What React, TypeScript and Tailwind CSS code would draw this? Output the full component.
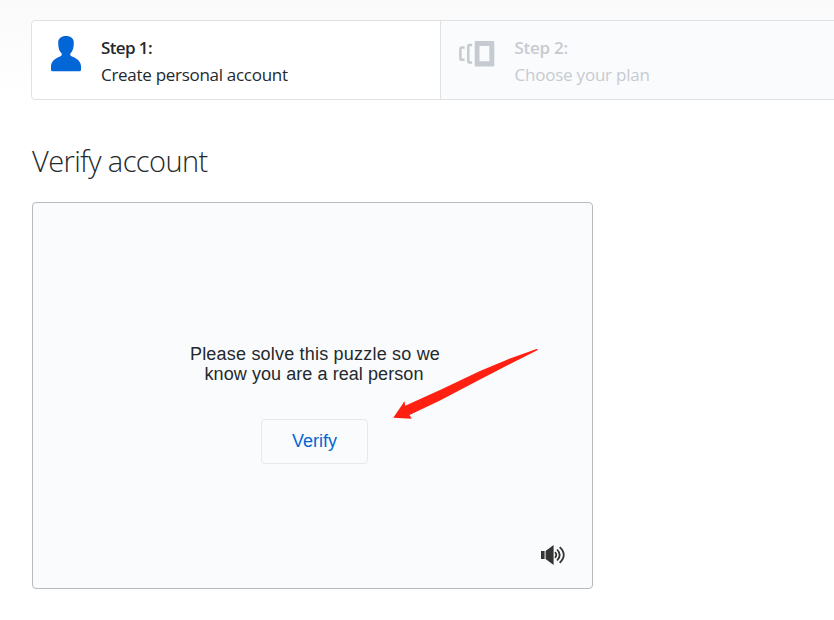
function PersonIcon() {
  return (
    <svg className="block h-9 w-[31px]" viewBox="51 36 31 36" fill="#0366d6">
      <path d="M66 36C61.3 36 58.2 38.5 58.2 42.5C58.2 47.5 59 51 61.7 53.4V54.8C61.7 55.8 61 56.1 59.5 56.7C54.5 58.6 51 61.8 51 66.5V69.7Q51 71.3 52.5 71.3H79.5Q81 71.3 81 69.7V66.5C81 61.8 77.5 58.6 72.5 56.7C71 56.1 70.3 55.8 70.3 54.8V53.4C73 51 73.8 47.5 73.8 42.5C73.8 38.5 70.7 36 66 36Z" />
    </svg>
  );
}

function VersionsIcon() {
  return (
    <svg className="block h-[26px] w-9" viewBox="459 41 36 26" fill="none" stroke="#c6cbd1">
      <path fill="#c6cbd1" stroke="none" fillRule="evenodd" d="M476 41H493Q494.3 41 494.3 42.3V65.2Q494.3 66.5 493 66.5H476Q474.7 66.5 474.7 65.2V42.3Q474.7 41 476 41ZM479.5 46V61.3H489.3V46Z" />
      <path strokeWidth="2.5" d="M472.1 44.9H469.3Q468.3 44.9 468.3 45.9V61.5Q468.3 62.5 469.3 62.5H472.1" />
      <path strokeWidth="2.5" d="M464.6 47.5H461.7Q460.4 47.5 460.4 48.8V58.5Q460.4 59.8 461.7 59.8H464.6" />
    </svg>
  );
}

function SpeakerIcon() {
  return (
    <svg className="block h-5 w-[25px]" viewBox="541 545 25 20" fill="#333">
      <path d="M541 551H544.6V559H541ZM545.6 551L553.6 545V565L545.6 559Z" />
      <g fill="none" stroke="#333" strokeWidth="1.8">
        <path d="M555 552.2Q557.6 555 555 557.8" />
        <path d="M557.1 549.5Q562.3 555 557.1 560.5" />
        <path d="M559.7 547.2Q567.8 555 559.7 562.8" />
      </g>
    </svg>
  );
}

function Arrow() {
  return (
    <svg className="pointer-events-none absolute left-[360px] top-[145px] h-[72px] w-[146px]" viewBox="393 348 146 72" fill="#ff2011">
      <path d="M393.3 417.7L404.5 401.3L405.2 405.8L440 390L480 371L510 358.5L537.2 348.7L537.8 349.9L512 363L480 379.5L440 400.5L409.5 415L411.8 418.8Z" />
    </svg>
  );
}

export default function App() {
  return (
    <div className="h-[620px] w-[834px] overflow-hidden bg-linear-to-b from-[#fafafa] to-white to-[100px] pl-[31px] pt-5 font-['Open_Sans','Noto_Sans',sans-serif] text-[#24292e]">
      <ol className="flex h-20 w-[840px] overflow-hidden rounded-[4px] border border-[#dfe2e5] bg-white text-[17px] leading-[27px]">
        <li className="flex w-[409px] shrink-0 border-r border-[#dfe2e5] pl-[19px] pt-[13px]">
          <div className="w-[50px] pt-0.5">
            <PersonIcon />
          </div>
          <div>
            <strong className="block w-fit font-semibold tracking-[-0.6px]">Step 1:</strong>
            <span className="block w-fit tracking-[-0.29px]">Create personal account</span>
          </div>
        </li>
        <li className="flex grow bg-[#fafbfc] pl-[18px] pt-[13px] text-[#c6cbd1]">
          <div className="w-[55.5px] pt-[7px]">
            <VersionsIcon />
          </div>
          <div>
            <strong className="block w-fit font-semibold tracking-[-0.25px]">Step 2:</strong>
            <span className="block w-fit tracking-[-0.22px]">Choose your plan</span>
          </div>
        </li>
      </ol>
      <h1 className="ml-px mt-[38px] h-[46px] w-fit text-[29px] font-light leading-[45px] tracking-[-0.6px]">Verify account</h1>
      <section className="relative ml-px mt-[18px] flex h-[387px] w-[561px] flex-col rounded-[4px] border border-[#b8bbbd] bg-[#fafbfc] pt-[141px] font-['Liberation_Sans',Arial,sans-serif]">
        <p className="ml-[3px] text-center text-[18px] leading-5">
          <span className="ml-0.5 tracking-[0.2px]">Please solve this puzzle so we</span>
          <br />
          <span className="tracking-[0.07px]">know you are a real person</span>
        </p>
        <button className="ml-[228px] mt-[35px] h-[45px] w-[107px] rounded-[4px] border border-[#e6e8ea] bg-[#fafbfc] pb-px text-[18px] text-[#0366d6]">Verify</button>
        <div className="ml-[508px] mt-[81px]">
          <SpeakerIcon />
        </div>
        <Arrow />
      </section>
    </div>
  );
}
